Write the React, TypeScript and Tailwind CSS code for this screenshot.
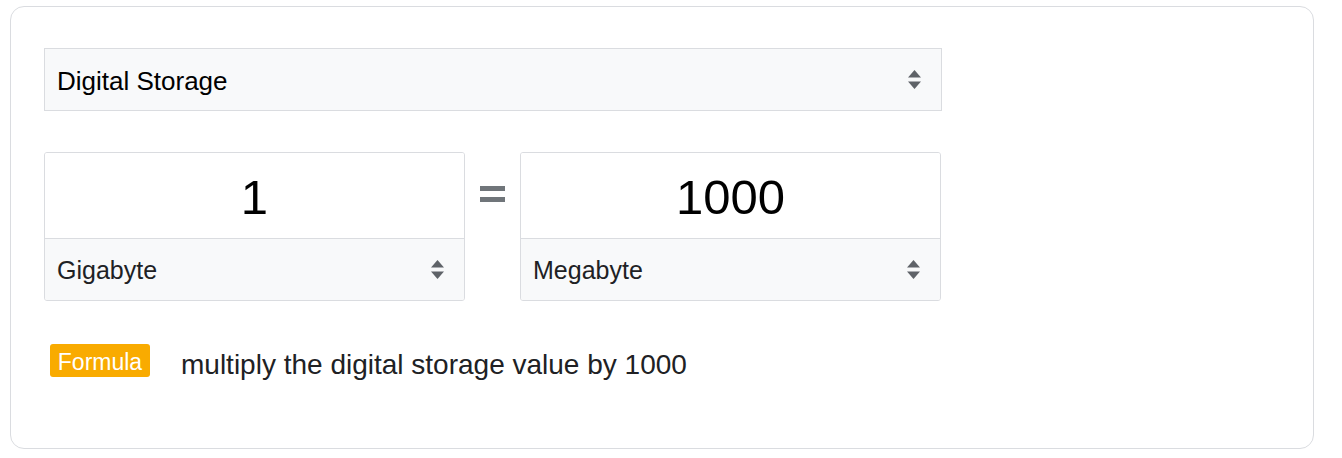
import React from "react";

function Arrows() {
  return (
    <svg width="13" height="21" viewBox="0 0 13 21" className="shrink-0">
      <polygon points="0,8.5 6.5,1 13,8.5" fill="#5f6368" />
      <polygon points="0,12.5 6.5,20 13,12.5" fill="#5f6368" />
    </svg>
  );
}

function UnitBox({ value, unit }: { value: string; unit: string }) {
  return (
    <div className="w-[421px] border border-[#dadce0] rounded-[3px] flex flex-col overflow-hidden">
      <div className="h-[85px] bg-white flex items-center justify-center text-[49px] text-black leading-none pt-[3px]">
        {value}
      </div>
      <div className="h-[62px] border-t border-[#dadce0] bg-[#f8f9fa] flex items-center justify-between pl-[12px] pr-[20px] text-[25px] text-[#202124]">
        <span className="pt-[2px]">{unit}</span>
        <Arrows />
      </div>
    </div>
  );
}

export default function App() {
  return (
    <div className="bg-white w-[1342px] h-[458px] pl-[10px] pt-[6px] font-['Liberation_Sans',Arial,sans-serif]">
      <div className="w-[1304px] h-[443px] border border-[#dadce0] rounded-[14px] pl-[33px] pt-[41px]">
        <div className="w-[898px] h-[63px] border border-[#dadce0] bg-[#f8f9fa] flex items-center justify-between pl-[12px] pr-[20px] text-[26px] text-black">
          <span className="pt-[3px]">Digital Storage</span>
          <Arrows />
        </div>
        <div className="flex items-start mt-[41px]">
          <UnitBox value="1" unit="Gigabyte" />
          <div className="w-[55px] flex flex-col items-center pt-[34px] gap-[6px]">
            <div className="w-[25px] h-[5px] bg-[#70757a]" />
            <div className="w-[25px] h-[5px] bg-[#70757a]" />
          </div>
          <UnitBox value="1000" unit="Megabyte" />
        </div>
        <div className="flex items-start mt-[43px] ml-[6px]">
          <div className="w-[100px] h-[33px] bg-[#f9ab00] rounded-[3px] text-white text-[23px] leading-none flex items-center justify-center pt-[3px]">
            Formula
          </div>
          <div className="ml-[31px] mt-[7px] text-[28px] leading-none text-[#202124]">
            multiply the digital storage value by 1000
          </div>
        </div>
      </div>
    </div>
  );
}
